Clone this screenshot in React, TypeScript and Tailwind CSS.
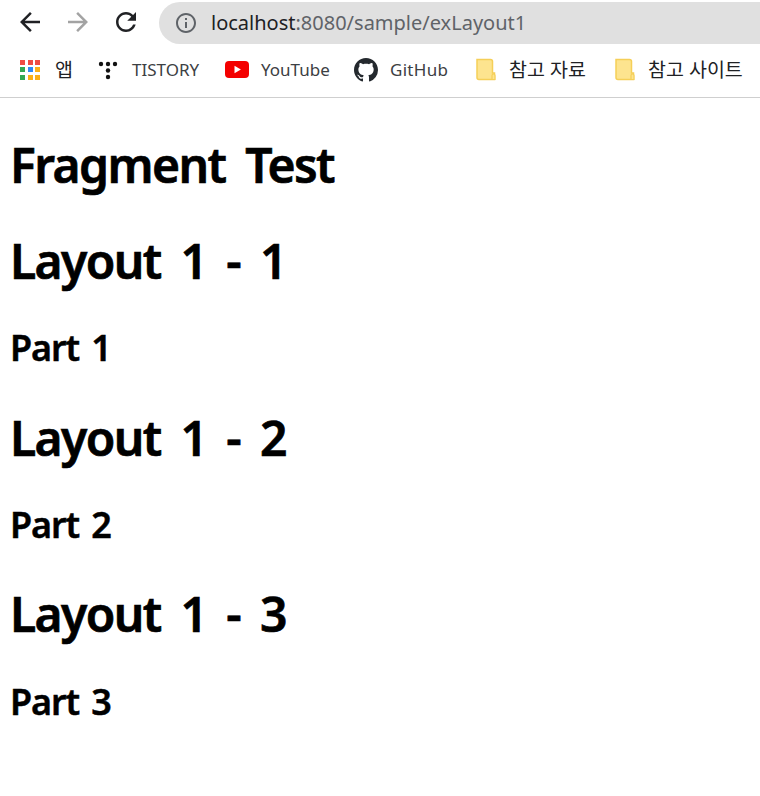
const FONT = "font-['Noto_Sans','Noto_Sans_CJK_KR',sans-serif]";

function Folder() {
  return (
    <svg width="20" height="23" viewBox="0 0 20 23">
      <path d="M1 1.5h13.5a2 2 0 0 1 2 2V15h2v6.5H3a2 2 0 0 1-2-2z" fill="#fde48f" stroke="#f5cf58" strokeWidth="1.5" />
      <path d="M16 21.5v-4a1.5 1.5 0 0 1 3 0v4z" fill="#fde48f" stroke="#f5cf58" strokeWidth="1.2" />
    </svg>
  );
}

function AppsGrid() {
  const colors = ['#ef4d43', '#ef4d43', '#ef4d43', '#34a853', '#2f8af5', '#fbb017', '#34a853', '#fbb017', '#fbb017'];
  return (
    <div className="grid grid-cols-[repeat(3,5px)] gap-[2.5px]">
      {colors.map((c, i) => (
        <div key={i} className="w-[5px] h-[5px]" style={{ backgroundColor: c }} />
      ))}
    </div>
  );
}

function TistoryIcon() {
  return (
    <svg width="20" height="20" viewBox="0 0 20 20" fill="#111">
      <circle cx="3" cy="4" r="2.2" />
      <circle cx="10" cy="4" r="2.2" />
      <circle cx="17" cy="4" r="2.2" />
      <circle cx="10" cy="10.5" r="2.2" />
      <circle cx="10" cy="17" r="2.2" />
    </svg>
  );
}

function YoutubeIcon() {
  return (
    <svg width="24" height="17" viewBox="0 0 24 17">
      <rect width="24" height="17" rx="4" fill="#f40000" />
      <path d="M9.5 4.8v7.4l6.4-3.7z" fill="#fff" />
    </svg>
  );
}

function GithubIcon() {
  return (
    <svg width="24" height="24" viewBox="0 0 16 16" fill="#24292e">
      <path d="M8 0C3.58 0 0 3.58 0 8c0 3.54 2.29 6.53 5.47 7.59.4.07.55-.17.55-.38 0-.19-.01-.82-.01-1.49-2.01.37-2.53-.49-2.69-.94-.09-.23-.48-.94-.82-1.13-.28-.15-.68-.52-.01-.53.63-.01 1.08.58 1.23.82.72 1.21 1.87.87 2.33.66.07-.52.28-.87.51-1.07-1.78-.2-3.64-.89-3.64-3.95 0-.87.31-1.59.82-2.15-.08-.2-.36-1.02.08-2.12 0 0 .67-.21 2.2.82.64-.18 1.32-.27 2-.27s1.36.09 2 .27c1.53-1.04 2.2-.82 2.2-.82.44 1.1.16 1.92.08 2.12.51.56.82 1.27.82 2.15 0 3.07-1.87 3.75-3.65 3.95.29.25.54.73.54 1.48 0 1.07-.01 1.93-.01 2.2 0 .21.15.46.55.38A8.01 8.01 0 0 0 16 8c0-4.42-3.58-8-8-8z" />
    </svg>
  );
}

function ArrowIcon({ flip, color }: { flip?: boolean; color: string }) {
  return (
    <svg width="30" height="30" viewBox="0 0 24 24" fill={color} className={flip ? 'rotate-180' : ''}>
      <path d="M20 11H7.83l5.59-5.59L12 4l-8 8 8 8 1.41-1.41L7.83 13H20v-2z" />
    </svg>
  );
}

function ReloadIcon() {
  return (
    <svg width="30" height="30" viewBox="0 0 24 24" fill="#202124">
      <path d="M17.65 6.35C16.2 4.9 14.21 4 12 4c-4.42 0-7.99 3.58-7.99 8s3.57 8 7.99 8c3.73 0 6.84-2.55 7.73-6h-2.08c-.82 2.33-3.04 4-5.65 4-3.31 0-6-2.69-6-6s2.69-6 6-6c1.66 0 3.14.69 4.22 1.78L13 11h7V4l-2.35 2.35z" />
    </svg>
  );
}

function InfoIcon() {
  return (
    <svg width="24" height="24" viewBox="0 0 24 24" fill="#5f6368">
      <path d="M11 7h2v2h-2zm0 4h2v6h-2zm1-9C6.48 2 2 6.48 2 12s4.48 10 10 10 10-4.48 10-10S17.52 2 12 2zm0 18c-4.41 0-8-3.59-8-8s3.59-8 8-8 8 3.59 8 8-3.59 8-8 8z" />
    </svg>
  );
}

const H1 = "text-[48px] leading-[64px] font-semibold [-webkit-text-stroke:0.7px_black] [word-spacing:9px] tracking-[-1.6px]";
const H2 = "text-[36px] leading-[48px] font-semibold [-webkit-text-stroke:0.5px_black] [word-spacing:4px] tracking-[-1.1px]";

export default function App() {
  return (
    <div className={`${FONT} h-[796px] w-[760px] overflow-hidden bg-white text-black`}>
      <div className="h-[44px] flex items-center">
        <div className="w-[59px] flex justify-center">
          <ArrowIcon color="#202124" />
        </div>
        <div className="w-[38px] flex justify-center">
          <ArrowIcon flip color="#a3a3a3" />
        </div>
        <div className="w-[58px] flex justify-center">
          <ReloadIcon />
        </div>
        <div className="ml-[4px] flex-1 h-[42px] mt-[2px] rounded-l-[21px] bg-[#e0e0e0] flex items-center pl-[15px] gap-[13px]">
          <InfoIcon />
          <span className="text-[20px] text-[#5f6368]">
            <span className="text-[#202124]">localhost</span>:8080/sample/exLayout1
          </span>
        </div>
      </div>
      <div className="h-[54px] border-b border-[#cfcfcf] flex items-center text-[17px] text-[#3c4043] pb-[2px]">
        <div className="ml-[20px] w-[35px]"><AppsGrid /></div>
        <span className="w-[43px] text-[19.5px] text-[#202124]">앱</span>
        <div className="w-[34px]"><TistoryIcon /></div>
        <span className="w-[93px]">TISTORY</span>
        <div className="w-[36px]"><YoutubeIcon /></div>
        <span className="w-[93px]">YouTube</span>
        <div className="w-[36px]"><GithubIcon /></div>
        <span className="w-[86px] tracking-[0.3px]">GitHub</span>
        <div className="w-[33px]"><Folder /></div>
        <span className="w-[106px] text-[19.5px] text-[#202124]">참고 자료</span>
        <div className="w-[33px]"><Folder /></div>
        <span className="text-[19.5px] text-[#202124]">참고 사이트</span>
      </div>
      <div className="pl-[10px] pt-[35px]">
        <h1 className={H1}>Fragment Test</h1>
        <h1 className={`${H1} mt-[32px]`}>Layout 1 - 1</h1>
        <h2 className={`${H2} mt-[31px]`}>Part 1</h2>
        <h1 className={`${H1} mt-[34px]`}>Layout 1 - 2</h1>
        <h2 className={`${H2} mt-[31px]`}>Part 2</h2>
        <h1 className={`${H1} mt-[33px]`}>Layout 1 - 3</h1>
        <h2 className={`${H2} mt-[32px]`}>Part 3</h2>
      </div>
    </div>
  );
}
